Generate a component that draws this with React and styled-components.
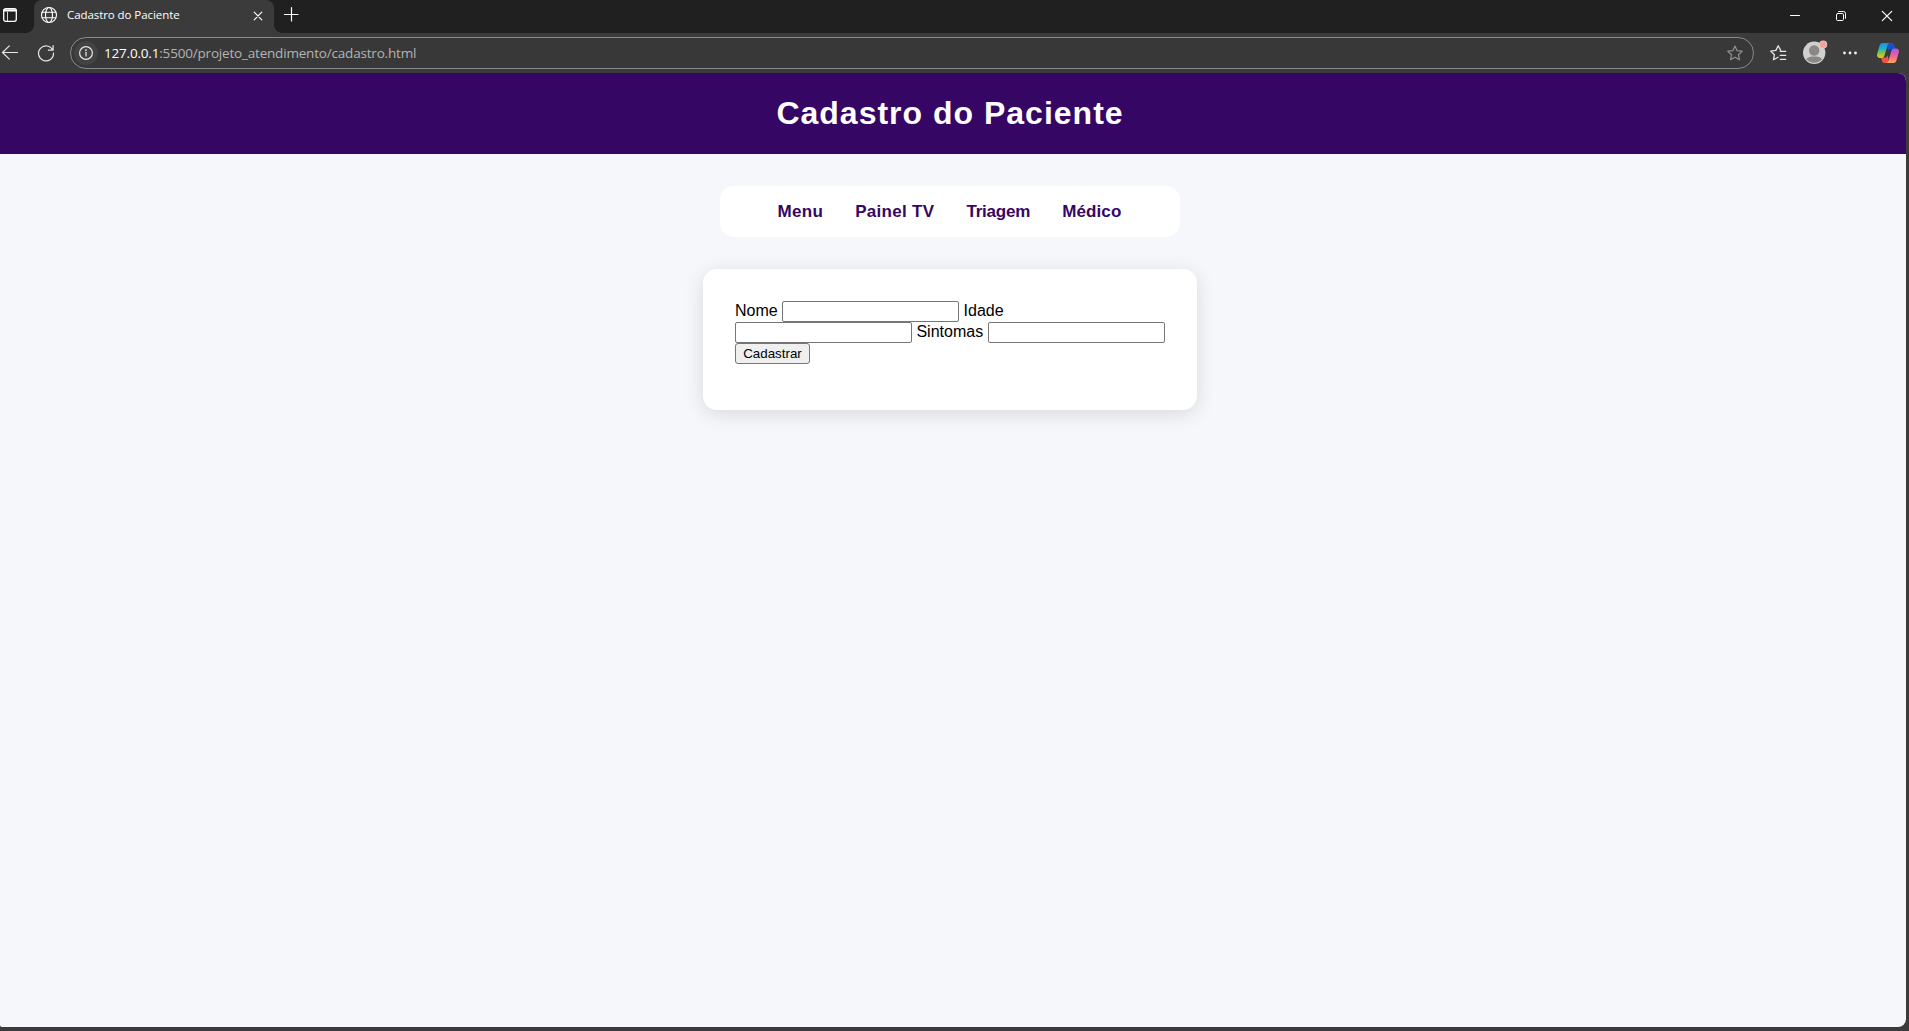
import React from 'react';
import styled, { createGlobalStyle } from 'styled-components';

const Global = createGlobalStyle`
  * { box-sizing: border-box; }
  html, body, #root { height: 100%; margin: 0; }
  body { overflow: hidden; background: #3b3b3b; font-family: "Liberation Sans", Arial, sans-serif; }
`;

const Window = styled.div`
  height: 100vh;
  display: flex;
  flex-direction: column;
  background: #3b3b3b;
`;

const TabStrip = styled.div`
  height: 33px;
  flex: none;
  display: flex;
  align-items: stretch;
  background: #202020;
  color: #fff;
`;

const IconBox = styled.span`
  width: ${p => p.$w}px;
  height: ${p => p.$h || p.$w}px;
  margin-left: ${p => p.$ml || 0}px;
  margin-right: ${p => p.$mr || 0}px;
  margin-top: ${p => p.$mt || 0}px;
  color: ${p => p.$color || 'inherit'};
  flex: none;
  display: block;
  svg { display: block; width: 100%; height: 100%; overflow: visible; }
`;

const Foot = styled.span`
  width: 8px;
  height: 8px;
  flex: none;
  align-self: flex-end;
  background: radial-gradient(circle at ${p => (p.$right ? '100%' : '0')} 0, #202020 7.5px, #3b3b3b 8.2px);
`;

const Tab = styled.div`
  width: 240px;
  display: flex;
  align-items: flex-start;
  background: #3b3b3b;
  border-radius: 8px 8px 0 0;
`;

const TabTitle = styled.span`
  width: 186px;
  margin: 7px 0 0 10px;
  font: 11.5px/16px "Open Sans", sans-serif;
  letter-spacing: -0.07px;
  white-space: nowrap;
`;

const WindowButtons = styled.div`
  margin-left: auto;
  display: flex;
  align-items: flex-start;
  padding-right: 17px;
`;

const Toolbar = styled.div`
  height: 40px;
  flex: none;
  display: flex;
  align-items: flex-start;
  color: #e8e8e8;
`;

const AddressBar = styled.div`
  width: 1684px;
  height: 32px;
  margin: 4px 0 0 16px;
  flex: none;
  display: flex;
  align-items: center;
  border: 1px solid #8a8a8a;
  border-radius: 16px;
  background: #383838;
`;

const SiteInfo = styled.span`
  width: 24px;
  height: 24px;
  margin-left: 3px;
  display: flex;
  align-items: center;
  justify-content: center;
  border-radius: 12px;
  background: #434343;
`;

const Url = styled.span`
  flex: 1;
  margin-left: 6px;
  font: 13.5px/20px "Open Sans", sans-serif;
  letter-spacing: -0.19px;
  color: #b4b4b4;
  b { font-weight: 400; color: #fff; }
`;

const Page = styled.main`
  width: 1906px;
  height: 954px;
  flex: none;
  display: flex;
  flex-direction: column;
  background: #f5f7fb;
  border-radius: 0 8px 8px 2px;
  overflow: hidden;
`;

const Header = styled.header`
  height: 81px;
  padding: 22px 6px 23px 0;
  background: #360664;
  text-align: center;
`;

const Title = styled.h1`
  margin: 0;
  font-size: 32px;
  line-height: 36px;
  letter-spacing: 1px;
  color: #fff;
`;

const Content = styled.div`
  display: flex;
  flex-direction: column;
  align-items: center;
  gap: 32px;
  padding: 32px 6px 0 0;
`;

const Nav = styled.nav`
  width: 460px;
  height: 51px;
  padding-right: 1px;
  display: flex;
  align-items: center;
  justify-content: center;
  gap: 32px;
  background: #fff;
  border-radius: 14px;
`;

const NavLink = styled.a`
  font-size: 17px;
  font-weight: 700;
  letter-spacing: ${p => p.$tracking}px;
  color: #360664;
`;

const Card = styled.form`
  width: 494px;
  height: 141px;
  padding: 32px;
  background: #fff;
  border-radius: 14px;
  box-shadow: 0 4px 20px rgba(0, 0, 0, 0.12);
`;

const Line = styled.div`
  height: 21px;
  display: flex;
  align-items: flex-start;
  gap: 4.45px;
  font-size: 16px;
  line-height: 19px;
  color: #000;
`;

const Input = styled.input`
  width: 177px;
  height: 21px;
  padding: 1px 2px;
  border: 1px solid #767676;
  border-radius: 2px;
  background: #fff;
  outline: none;
`;

const Submit = styled.button`
  width: 75px;
  height: 21px;
  padding: 0;
  border: 1px solid #767676;
  border-radius: 3px;
  background: #efefef;
  font: 13.333px/19px "Liberation Sans", Arial, sans-serif;
  color: #000;
`;

const Stroke = ({ vb, w = 1.2, children }) => (
  <svg viewBox={vb} fill="none" stroke="currentColor" strokeWidth={w} strokeLinecap="round" strokeLinejoin="round">
    {children}
  </svg>
);

const STAR = 'M8 1 10.1 5.7 15.2 6.2 11.4 9.7 12.5 14.8 8 12.2 3.5 14.8 4.6 9.7 .8 6.2 5.9 5.7Z';

const Copilot = () => (
  <svg viewBox="0 0 22 20">
    <defs>
      <linearGradient id="cl" x1="0" y1="0" x2="0" y2="1">
        <stop offset="0" stopColor="#1b8fe8" />
        <stop offset=".4" stopColor="#25b3c0" />
        <stop offset=".7" stopColor="#8cc63f" />
        <stop offset="1" stopColor="#f5c518" />
      </linearGradient>
      <linearGradient id="cr" x1="0" y1="0" x2="0" y2="1">
        <stop offset="0" stopColor="#a855f0" />
        <stop offset=".5" stopColor="#f0609a" />
        <stop offset="1" stopColor="#ffa552" />
      </linearGradient>
    </defs>
    <path d="M10 0H15C16.6 0 17.1 1.4 17.6 3.2L18.4 6H14.2C12.6 6 12 7 11.5 8.5Z" fill="#1750c8" />
    <path d="M12 20H7.5C5.8 20 5.2 18.6 4.7 16.9L4 14.6H8C9.6 14.6 10.2 13.5 10.7 12Z" fill="#f2553d" />
    <path d="M5.8 0H13C11.3 0 10.8 1.6 10.3 3.2L7.6 12.3C7.1 13.9 6.2 15 4.4 15H3C.8 15-.5 13.3.2 10.8L2.3 3.4C2.9 1.3 3.8 0 5.8 0Z" fill="url(#cl)" />
    <path d="M16.2 20H9C10.7 20 11.2 18.4 11.7 16.8L14.4 7.9C14.9 6.2 15.8 5.4 17.6 5.4H19C21.3 5.4 22.5 7 21.8 9.4L19.7 16.7C19.1 18.8 18.2 20 16.2 20Z" fill="url(#cr)" />
  </svg>
);

function BrowserTabs() {
  return (
    <TabStrip>
      <IconBox $w={14} $ml={3} $mt={8}>
        <Stroke vb="0 0 14 14" w={1.3}>
          <rect x=".7" y=".7" width="12.6" height="12.6" rx="2" />
          <path d="M1 2.8H13M1 1.8H13" />
          <path d="M4.5 4V13" strokeWidth=".8" />
        </Stroke>
      </IconBox>
      <IconBox $w={9} />
      <Foot />
      <Tab>
        <IconBox $w={16} $ml={7} $mt={7}>
          <Stroke vb="0 0 16 16" w={1.1}>
            <circle cx="8" cy="8" r="7.5" />
            <ellipse cx="8" cy="8" rx="3.5" ry="7.5" />
            <path d="M1.2 5.3H14.8M1.2 10.7H14.8" />
          </Stroke>
        </IconBox>
        <TabTitle>Cadastro do Paciente</TabTitle>
        <IconBox $w={8} $ml={1} $mt={12}>
          <Stroke vb="0 0 8 8" w={1.2}><path d="M.2 .2 7.8 7.8M7.8 .2 .2 7.8" /></Stroke>
        </IconBox>
      </Tab>
      <Foot $right />
      <IconBox $w={14} $ml={2} $mt={7}>
        <Stroke vb="0 0 14 14"><path d="M7.5 .5V14M.5 7.5H14" /></Stroke>
      </IconBox>
      <WindowButtons>
        <IconBox $w={10} $mt={10}><Stroke vb="0 0 10 10" w={1}><path d="M.5 5.5H9.5" /></Stroke></IconBox>
        <IconBox $w={10} $ml={36} $mt={11}>
          <Stroke vb="0 0 10 10" w={1}>
            <rect x=".5" y="2.5" width="7" height="7" rx="1.2" />
            <path d="M2.7 .5H7.5A2 2 0 0 1 9.5 2.5V7.3" />
          </Stroke>
        </IconBox>
        <IconBox $w={10} $ml={36} $mt={11}><Stroke vb="0 0 10 10"><path d="M.3.3 9.7 9.7M9.7.3.3 9.7" /></Stroke></IconBox>
      </WindowButtons>
    </TabStrip>
  );
}

function BrowserToolbar() {
  return (
    <Toolbar>
      <IconBox $w={16} $ml={2} $mt={12}>
        <Stroke vb="0 0 16 16"><path d="M15.5 7.5H.5M7.3 .9.5 7.5 7.3 14.1" /></Stroke>
      </IconBox>
      <IconBox $w={16} $ml={20} $mt={12}>
        <Stroke vb="0 0 16 16">
          <path d="M14.8 5.2A7.5 7.5 0 1 0 15.5 8M15.1 .5V5.2H10.4" />
        </Stroke>
      </IconBox>
      <AddressBar>
        <SiteInfo>
          <IconBox $w={14}>
            <Stroke vb="0 0 14 14" w={1.2}>
              <circle cx="7" cy="7" r="6.4" />
              <path d="M7 6.3V10" /><circle cx="7" cy="4.2" r=".3" />
            </Stroke>
          </IconBox>
        </SiteInfo>
        <Url><b>127.0.0.1</b>:5500/projeto_atendimento/cadastro.html</Url>
        <IconBox $w={16} $mr={10} $color="#8f8f8f">
          <Stroke vb="0 0 16 16"><path d={STAR} /></Stroke>
        </IconBox>
      </AddressBar>
      <IconBox $w={17} $h={16} $ml={16} $mt={12}>
        <Stroke vb="0 0 17 16" w={1.3}>
          <path d="M10.6 5.1 8.2 .8 5.9 5.4.7 6.1 4.4 9.8 3.5 14.7 8 12.3M10.3 6.4H15.7M10.3 10.4H15.7M10.3 14.3H15.7" />
        </Stroke>
      </IconBox>
      <IconBox $w={25} $h={24} $ml={16} $mt={7}>
        <svg viewBox="0 0 25 24">
          <circle cx="11.2" cy="12.8" r="11.2" fill="#d2d0ce" />
          <circle cx="11.2" cy="10.5" r="5.2" fill="#8a8886" />
          <path d="M3.2 19.3C5.2 16.8 7.7 16.5 11.2 16.5S17.2 16.8 19.2 19.3A11 11 0 0 1 3.2 19.3Z" fill="#8a8886" />
          <circle cx="20.2" cy="4.5" r="4" fill="#d2d0ce" />
          <circle cx="20.2" cy="4.5" r="3.2" fill="#ff9d98" />
        </svg>
      </IconBox>
      <IconBox $w={14} $h={4} $ml={15} $mt={18}>
        <svg viewBox="0 0 14 4" fill="#f0f0f0">
          <circle cx="1.5" cy="2" r="1.4" />
          <circle cx="7" cy="2" r="1.4" />
          <circle cx="12.5" cy="2" r="1.4" />
        </svg>
      </IconBox>
      <IconBox $w={22} $h={20} $ml={20} $mt={10}><Copilot /></IconBox>
    </Toolbar>
  );
}

const LINKS = [
  { label: 'Menu', tracking: 0.3 },
  { label: 'Painel TV', tracking: 0.3 },
  { label: 'Triagem', tracking: -0.2 },
  { label: 'Médico', tracking: 0.1 },
];

export default function App() {
  return (
    <Window>
      <Global />
      <BrowserTabs />
      <BrowserToolbar />
      <Page>
        <Header><Title>Cadastro do Paciente</Title></Header>
        <Content>
          <Nav>
            {LINKS.map(l => <NavLink key={l.label} $tracking={l.tracking}>{l.label}</NavLink>)}
          </Nav>
          <Card>
            <Line><label>Nome</label><Input /><label>Idade</label></Line>
            <Line><Input /><label>Sintomas</label><Input /></Line>
            <Line><Submit type="button">Cadastrar</Submit></Line>
          </Card>
        </Content>
      </Page>
    </Window>
  );
}
